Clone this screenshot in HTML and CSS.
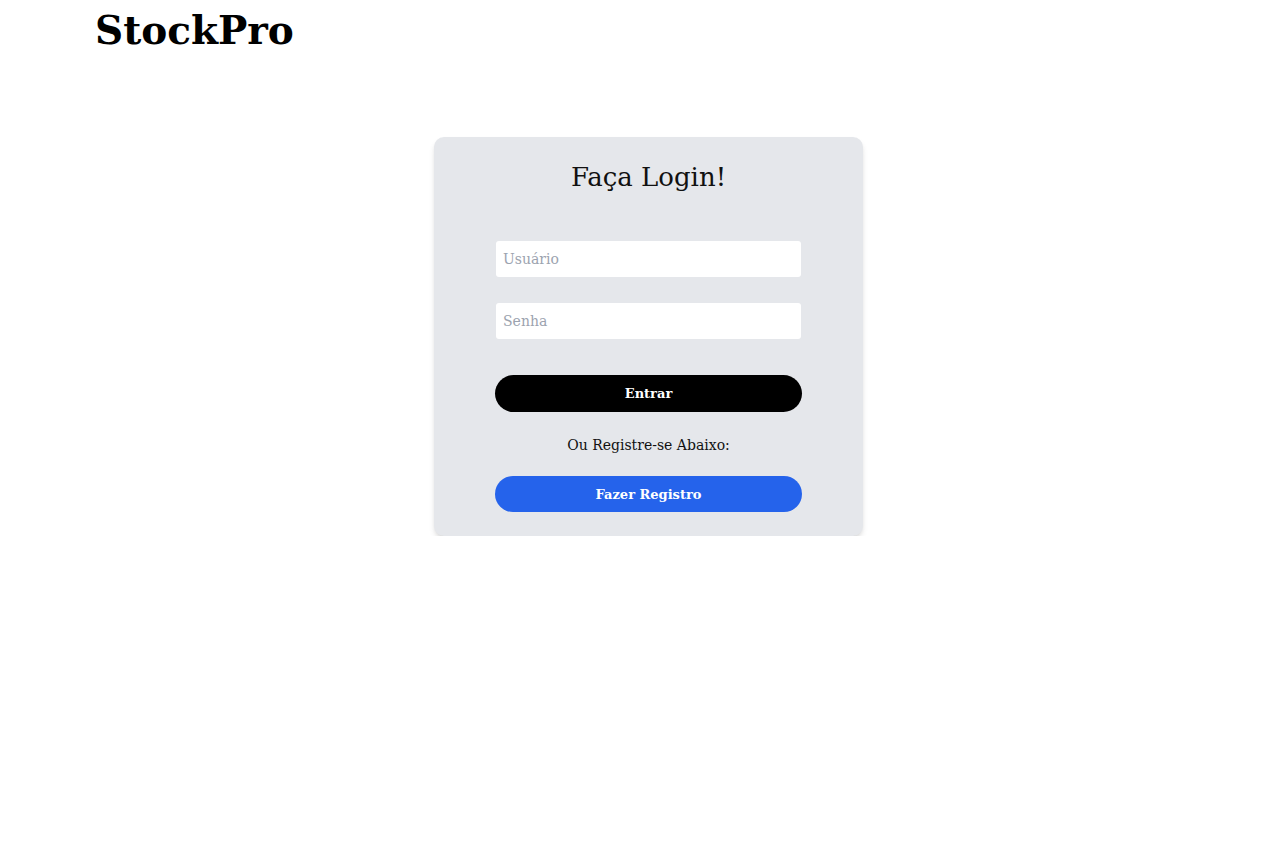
FILE: index.html
```html
<!DOCTYPE html>
<html lang="pt-BR">
<head>
<meta charset="utf-8">
<title>StockPro</title>
<link rel="stylesheet" href="styles.css">
</head>
<body>
<header class="header">
  <h1 class="brand">StockPro</h1>
</header>
<main class="main">
  <form class="card">
    <h2 class="card-title">Faça Login!</h2>
    <div class="fields">
      <input class="field" type="text" placeholder="Usuário">
      <input class="field" type="password" placeholder="Senha">
    </div>
    <button class="btn btn-dark" type="button">Entrar</button>
    <p class="hint">Ou Registre-se Abaixo:</p>
    <button class="btn btn-blue" type="button">Fazer Registro</button>
  </form>
</main>
</body>
</html>
```
FILE: styles.css
```css
* { box-sizing: border-box; }
html, body { margin: 0; padding: 0; background: #fff; }
body {
  font-family: "DejaVu Serif", "Liberation Serif", serif;
  color: #111;
}
.header {
  padding: 4px 0 0 95px;
  height: 62px;
}
.brand {
  margin: 0;
  font-size: 39px;
  line-height: 52px;
  font-weight: 700;
  color: #000;
}
.main {
  display: flex;
  justify-content: center;
  padding-top: 75px;
  padding-left: 17px;
}
.card {
  width: 429px;
  height: 399px;
  background: #e5e7eb;
  border-radius: 10px;
  box-shadow: 0 4px 6px -1px rgba(0,0,0,0.12), 0 2px 4px -2px rgba(0,0,0,0.1);
  padding: 22px 61px 24px;
  display: flex;
  flex-direction: column;
  align-items: stretch;
}
.card-title {
  margin: 0;
  text-align: center;
  font-size: 26px;
  line-height: 36px;
  font-weight: 400;
  color: #111;
}
.fields {
  display: flex;
  flex-direction: column;
  gap: 26px;
  margin-top: 46px;
  padding: 0 1px;
}
.field {
  height: 36px;
  border: none;
  border-radius: 3px;
  background: #fff;
  padding: 0 7px;
  font-family: inherit;
  font-size: 14px;
  color: #111;
  outline: none;
}
.field::placeholder { color: #9ca3af; }
.btn {
  height: 38px;
  border: none;
  border-radius: 19px;
  font-family: inherit;
  font-size: 13px;
  font-weight: 700;
  color: #fff;
  cursor: pointer;
  padding-top: 2px;
}
.btn-dark { background: #000; margin-top: 36px; }
.btn-blue { background: #2563eb; }
.hint {
  margin: 21px 0 19px;
  text-align: center;
  font-size: 14px;
  line-height: 24px;
  color: #111;
}
```
